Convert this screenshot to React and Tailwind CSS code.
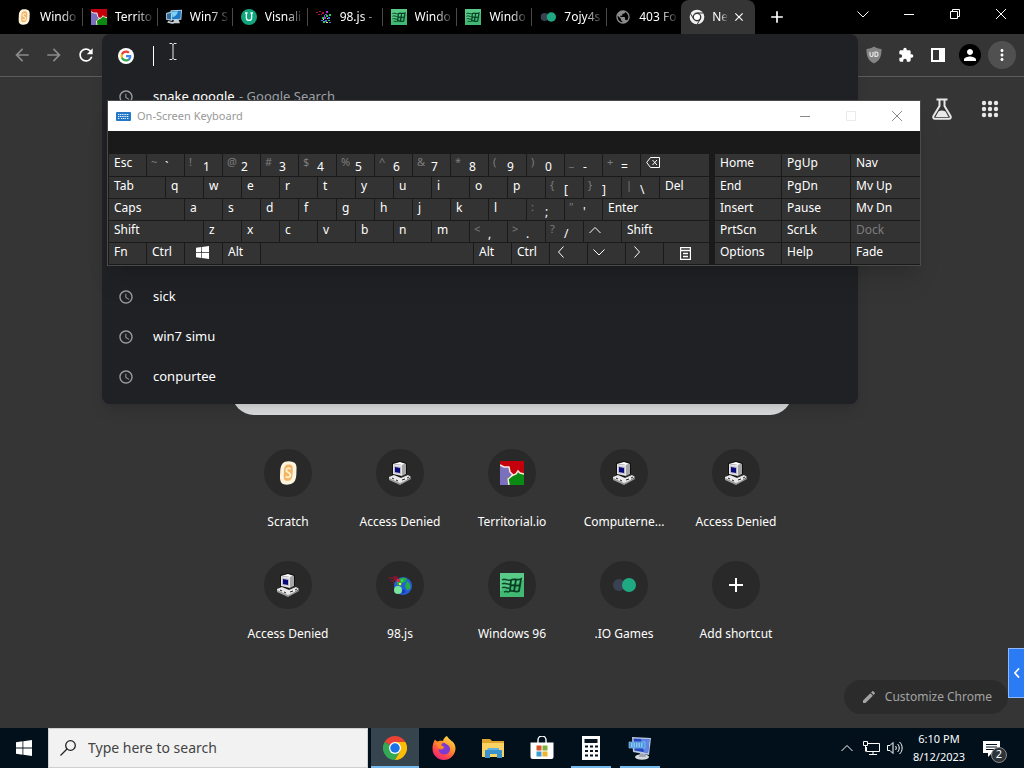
import React from 'react';
import {
  MdAccessTime,
  MdAdd,
  MdArrowBack,
  MdArrowForward,
  MdClose,
  MdEdit,
  MdExtension,
  MdMoreVert,
  MdPerson,
  MdPublic,
  MdRefresh,
} from 'react-icons/md';

/* ---------- Logos and favicons ---------- */

const ScratchIcon = ({ className }) => (
  <svg viewBox="0 0 24 24" className={className} aria-hidden="true">
    <path d="M9 .8C12-.3 18 0 19.800 3.200c1.200 2.500.6 5 .6 8.500 0 4-.6 9-4.400 10.900-3 1.500-8.600 1.600-10.600-.9C3.400 19.200 4 15 4.200 11c.1-4 .8-8.600 4.800-10.200z" fill="#fff5df" />
    <path d="M10.300 4c2-.8 5-.6 6 1.100.8 1.800.5 4.500.4 7-.2 3.200-.7 6.200-2.600 7.100-2 .9-4.800.9-5.800-.5-1-1.800-.5-5-.4-8.200.1-2.700.5-5.700 2.400-6.500z" fill="#f3b565" />
    <path d="M14.500 8c-1.600-1.400-4.200-.9-4.200 1.200 0 2.600 4.200 2.100 4.200 4.900 0 2.300-3 2.900-4.800 1.400" fill="none" stroke="#fff0cf" strokeWidth="1.800" />
  </svg>
);

const TerritorialIcon = ({ className }) => (
  <svg viewBox="0 0 24 24" className={className} aria-hidden="true">
    <rect width="24" height="24" fill="#c4000c" />
    <path d="M0 4l4 2 5 0 1 5 3 2-2 2-4 3 2 6H0z" fill="#7a70bd" />
    <path d="M24 13l-4-1-2-2-2 3-4 2-2 0-3 3 2 6h15z" fill="#0a8a12" />
    <path d="M0 4l4 2 5 0 1 5 3 3-5 4 1 6M11 15l5-2 2-3 2 2 4 1" fill="none" stroke="#ffe9dd" strokeWidth="1.500" />
  </svg>
);

const Win7Icon = ({ className }) => (
  <svg viewBox="0 0 24 24" className={className} aria-hidden="true">
    <path d="M0 6l9-3v15l-9-2z" fill="#9dbccd" />
    <path d="M1.500 7.500l6.500-2v10l-6.500-1z" fill="#2e6e9c" />
    <path d="M7 2l17-1-1 15-15 1z" fill="#b6d6e8" />
    <path d="M8.500 3.500l14-1-.8 12-12.400 1z" fill="#1c77c4" />
    <path d="M9 4l9-.7c-1 5-4 8-8.500 9z" fill="#7fd0f3" />
    <path d="M12 16.500h7l2 5H10zM3 18l9 2-1 2.500-9-2z" fill="#c3cdd2" />
  </svg>
);

const VisnalizeIcon = ({ className }) => (
  <svg viewBox="0 0 24 24" className={className} aria-hidden="true">
    <circle cx="12" cy="12" r="12" fill="#12a57d" />
    <path d="M8 6v7a4 4 0 0 0 8 0V6M6 6h4M14 6h4" fill="none" stroke="#e9fff8" strokeWidth="2" />
  </svg>
);

const JsIcon = ({ className }) => (
  <svg viewBox="0 0 24 24" className={className} aria-hidden="true">
    <path d="M1 5h4M3 8h3M6 4h3v3H6zM5 10h2" stroke="#7d1630" fill="#9c1130" strokeWidth="1.500" />
    <circle cx="15" cy="13" r="9" fill="#2460d8" />
    <path d="M9 8c3-4 8-4 10-2l-2 3-3 1-1 3-4-1zM19 8c3 2 4 5 3 8l-3 1-2-4z" fill="#28ad46" />
    <path d="M12 17l4-1 2 3-3 2z" fill="#1c3fc0" />
    <circle cx="10" cy="17" r="4" fill="#78e59a" />
    <path d="M9 6h3v3H9z" fill="#e02a35" />
    <path d="M13 6h2v3h-2z" fill="#29d65d" />
    <path d="M11 10h2v2h-2z" fill="#ffe34d" />
  </svg>
);

const PixelJsIcon = ({ className }) => (
  <svg viewBox="0 0 16 16" className={className} aria-hidden="true">
    <path d="M0 3h2v1H0zM2 5h2v1H2zM3 2h2v1H3zM6 3h2v2H6zM5 5h1v1H5z" fill="#b01345" />
    <path d="M10 2h2v2h-2zM9 5h2v1H9zM8 8h2v2H8z" fill="#a63bd6" />
    <path d="M6 8h2v2H6zM10 6h2v2h-2zM13 5h2v2h-2zM7 12h2v2H7zM12 11h2v1h-2z" fill="#28c95d" />
    <path d="M12 8h2v2h-2zM9 11h2v2H9zM5 11h2v1H5zM13 13h2v1h-2zM8 6h1v2H8z" fill="#3d6ff0" />
    <path d="M11 9h1v1h-1zM10 13h2v1h-2zM7 10h1v1H7z" fill="#f2ec72" />
  </svg>
);

const Win96Icon = ({ className }) => (
  <svg viewBox="0 0 24 24" className={className} aria-hidden="true">
    <rect width="24" height="24" fill="#41b873" />
    <path d="M0 0h24v7L0 18z" fill="#58c987" />
    <path d="M2 7c3-2 5 1 8 0M2 11c3-2 5 1 8 0M2 15c3-2 5 1 7 0M4 19c2-1 4 0 5 0" fill="none" stroke="#0b4a2a" strokeWidth="1.500" />
    <path d="M11 7c3-2 6 1 10-1l-2 12c-3 2-6-1-9 0zM16 6.500l-2 12M10.500 12.500c3-1 6 1 9.500-.5" fill="none" stroke="#073d22" strokeWidth="1.800" />
  </svg>
);

const IoIcon = ({ className }) => (
  <svg viewBox="0 0 24 24" className={className} aria-hidden="true">
    <circle cx="7" cy="12" r="6" fill="#3a4152" />
    <circle cx="17" cy="12" r="7" fill="#1fa982" />
  </svg>
);

const PcIcon = ({ className }) => (
  <svg viewBox="0 0 24 24" className={className} aria-hidden="true">
    <path d="M4 2l8-2 7 2v11l-7 3-8-2z" fill="#111" />
    <path d="M5 3l9 1v11l-9-2z" fill="#e4e4e4" />
    <path d="M14 4l4-1v10l-4 2z" fill="#a5a5a5" />
    <path d="M5 3l7-2 6 2-4 1z" fill="#fff" />
    <path d="M6 5l7 1v7l-7-1z" fill="#b9b9c9" />
    <path d="M7 6l5 1v5l-5-1z" fill="#09097c" />
    <path d="M1 16l5-2 7 3 7-3 3 2-10 7L1 18z" fill="#e9e9e9" />
    <path d="M1 17l11 5 11-5v1l-11 6L1 19z" fill="#9c9c9c" />
    <path d="M4 17l2 1M8 19l2 1M14 19l3-1M19 17l2-1" stroke="#222" />
  </svg>
);

const GoogleIcon = ({ className }) => (
  <svg viewBox="0 0 32 32" className={className} aria-hidden="true">
    <circle cx="16" cy="16" r="16" fill="#fff" />
    <g transform="translate(4 4)">
      <path d="M22.560 12.250c0-.78-.07-1.530-.2-2.250H12v4.260h5.920a5.060 5.060 0 0 1-2.200 3.320v2.770h3.570c2.080-1.920 3.270-4.740 3.270-8.100z" fill="#4285f4" />
      <path d="M12 23c2.970 0 5.460-.98 7.280-2.660l-3.570-2.770c-.98.66-2.230 1.060-3.710 1.060-2.860 0-5.290-1.930-6.160-4.530H2.180v2.840C3.990 20.530 7.700 23 12 23z" fill="#34a853" />
      <path d="M5.840 14.090a6.600 6.600 0 0 1 0-4.180V7.070H2.180a11 11 0 0 0 0 9.860z" fill="#fbbc05" />
      <path d="M12 5.380c1.620 0 3.060.56 4.210 1.640l3.150-3.150C17.450 2.090 14.970 1 12 1 7.700 1 3.990 3.470 2.180 7.070l3.660 2.840C6.710 7.310 9.140 5.380 12 5.380z" fill="#ea4335" />
    </g>
  </svg>
);

const ChromeLogo = ({ className }) => (
  <svg viewBox="0 0 48 48" className={className} aria-hidden="true">
    <path d="M24 24L3.200 12A24 24 0 0 1 44.800 12z" fill="#ea4335" />
    <path d="M24 24L3.200 12A24 24 0 0 0 24 48l10.400-18z" fill="#34a853" />
    <path d="M24 12h20.800A24 24 0 0 1 24 48l10.400-18z" fill="#fbbc05" />
    <circle cx="24" cy="24" r="12" fill="#fff" />
    <circle cx="24" cy="24" r="9.500" fill="#1a73e8" />
  </svg>
);

const MonoChromeIcon = ({ className }) => (
  <svg viewBox="0 0 24 24" className={className} aria-hidden="true">
    <circle cx="12" cy="12" r="8.800" fill="none" stroke="#f1f1f1" strokeWidth="4.400" />
    <circle cx="12" cy="12" r="4.600" fill="#fff" />
    <path d="M12 6h10M7 15L2 6.500M17 15l-5 8.500" stroke="#353535" strokeWidth="1.500" />
  </svg>
);

const FirefoxLogo = ({ className }) => (
  <svg viewBox="0 0 24 24" className={className} aria-hidden="true">
    <defs>
      <linearGradient id="fx-body" x1="0.8" y1="0" x2="0.2" y2="1">
        <stop offset="0" stopColor="#ffe34a" />
        <stop offset="0.4" stopColor="#ff9328" />
        <stop offset="0.75" stopColor="#ff3f4f" />
        <stop offset="1" stopColor="#e0258a" />
      </linearGradient>
    </defs>
    <path d="M15 0c1 2.500 3 3 4.500 5C22 6 23.800 10 23.500 13c-.5 6.200-5.500 11-11.500 11S.6 19.300.5 13C.4 9 1.500 6 3 3.500L5 6c2-1.500 4-1.500 6-1 .5-2.500 2-4 4-5z" fill="url(#fx-body)" />
    <path d="M8 8c2-1.500 4-2 6 0 3 1 4.500 3.500 4 6-.6 3-3 4.500-6 4.500S6.500 16 6.500 13c2 1 4 .8 5-.8-2-.4-4-1.700-3.500-4.200z" fill="#7b3ad3" />
    <path d="M3 4c2 2 5 2 8 3-1 .8-2 1.500-1.500 2.500l3 1.500c-1 1.800-3.500 1.800-6 1.500" fill="#ff8a26" />
  </svg>
);

const FolderLogo = ({ className }) => (
  <svg viewBox="0 0 24 24" className={className} aria-hidden="true">
    <path d="M1 3h8l2 2h12v5H1z" fill="#e0a52d" />
    <path d="M1 7h22v14H1z" fill="#fbd363" />
    <path d="M4 14h17v8h-5v-4H9v4H4z" fill="#3a93cf" />
    <path d="M6 14h12v-2H7z" fill="#62b3e4" />
  </svg>
);

const StoreLogo = ({ className }) => (
  <svg viewBox="0 0 24 24" className={className} aria-hidden="true">
    <path d="M8 7V4a4 4 0 0 1 8 0v3" fill="none" stroke="#fff" strokeWidth="1.400" />
    <path d="M.5 6.500h23V21a2 2 0 0 1-2 2h-19a2 2 0 0 1-2-2z" fill="#fff" />
    <path d="M6.500 9.500h5v5h-5z" fill="#d9542c" />
    <path d="M12.500 9.500h5v5h-5z" fill="#7fb13c" />
    <path d="M6.500 15.500h5v5h-5z" fill="#3c9bd6" />
    <path d="M12.500 15.500h5v5h-5z" fill="#efb32d" />
  </svg>
);

const CalcLogo = ({ className }) => (
  <svg viewBox="0 0 24 24" className={className} aria-hidden="true">
    <path d="M3 0h18v24H3z" fill="#fff" />
    <path d="M5.500 3h13v4h-13zM6 9.500h3v2H6zM11 9.500h3v2h-3zM16 9.500h3v2h-3zM6 14h3v2H6zM11 14h3v2h-3zM16 14h3v2h-3zM6 18.500h3v2H6zM11 18.500h3v2h-3zM16 18.500h3v2h-3z" fill="#06141f" />
  </svg>
);

const OskLogo = ({ className }) => (
  <svg viewBox="0 0 24 24" className={className} aria-hidden="true">
    <ellipse cx="14" cy="21" rx="7" ry="2.800" fill="#d6dade" />
    <path d="M12 17h5l1 4h-7z" fill="#9fa7b0" />
    <path d="M4 1l19 1-2 17-16-3z" fill="#b9c6dd" />
    <path d="M5.500 2.500l16 .8L20 17 6.500 14.600z" fill="#2448c4" />
    <path d="M13 3l8.500.3L20 17l-4-.7z" fill="#5e86e6" />
    <path d="M1 6h16v6H1z" fill="#3f95e0" stroke="#a9cdee" strokeWidth=".6" />
    <path d="M3 8h12M3 10h12" stroke="#e8f4ff" strokeDasharray="1.500 1" />
  </svg>
);

const WindowsLogo = ({ className }) => (
  <svg viewBox="0 0 16 16" className={className} fill="currentColor" aria-hidden="true">
    <path d="M0 2.200l6.500-.9v6.200H0zM7.300 1.200L16 0v7.500H7.300zM0 8.400h6.500v6.300L0 13.800zM7.300 8.400H16V16l-8.700-1.200z" />
  </svg>
);

const KeyboardIcon = ({ className }) => (
  <svg viewBox="0 0 15 9" className={className} aria-hidden="true">
    <rect width="15" height="9" rx="1" fill="#2478c7" />
    <path d="M2 2.500h11M2 4.500h11M2 6.500h2M5 6.500h5M11 6.500h2" stroke="#e5f2ff" strokeDasharray="1.200 .6" />
  </svg>
);

const FlaskIcon = () => (
  <svg viewBox="0 0 22 22" className="h-[22px] w-[22px]" aria-hidden="true">
    <path d="M5.500 1.500h11M8.500 2v6L2.500 18c-.8 1.500 0 2.700 1.500 2.700h14c1.500 0 2.300-1.200 1.500-2.700l-6-10V2" fill="none" stroke="#e8e8e8" strokeWidth="2" />
    <path d="M7.500 13.500c2-1.200 4-1.200 7 0l3 5.500H4.500z" fill="#e8e8e8" />
  </svg>
);

const AppsIcon = () => (
  <svg viewBox="0 0 18 18" className="h-[18px] w-[18px]" fill="#e8e8e8" aria-hidden="true">
    {[3, 9, 15].map((y) => [3, 9, 15].map((x) => <circle key={`${x}-${y}`} cx={x} cy={y} r="2.200" />))}
  </svg>
);

const ShieldIcon = () => (
  <svg viewBox="0 0 16 18" className="h-[18px] w-4" aria-hidden="true">
    <path d="M8 .5C10 2 13 3 15.500 3c.2 7-1.500 11.500-7.500 14.500C2 14.500.3 10 .5 3 3 3 6 2 8 .5z" fill="#858585" />
    <path d="M4 6v3a1.500 1.500 0 0 0 3 0V6M9 6v4.500h1a2 2 0 0 0 2-2.200A2 2 0 0 0 10 6z" fill="none" stroke="#e8e8e8" strokeWidth="1.200" />
  </svg>
);

const SidePanelIcon = () => (
  <svg viewBox="0 0 14 14" className="h-3.5 w-3.5" aria-hidden="true">
    <path d="M0 0h14v14H0zM2 2v10h6V2z" fill="#fff" fillRule="evenodd" />
  </svg>
);

// Thin line glyph used by window controls, arrow keys and tray icons
const Line = ({ d, className = 'h-3 w-3', width = 1 }) => (
  <svg viewBox="0 0 12 12" className={className} fill="none" stroke="currentColor" strokeWidth={width} aria-hidden="true">
    <path d={d} />
  </svg>
);

const paths = {
  up: 'M0.500 9L6 3.500L11.500 9',
  down: 'M0.500 3.500L6 9L11.500 3.500',
  left: 'M8.500 0.500L3.500 6L8.500 11.500',
  right: 'M3.500 0.500L8.500 6L3.500 11.500',
  minimize: 'M1 6.500H11',
  maximize: 'M1.500 1.500H10.500V10.500H1.500Z',
  restore: 'M1.500 3.500H8.500V10.500H1.500ZM3.500 3.500V1.500H10.500V8.500H8.500',
  close: 'M1 1L11 11M11 1L1 11',
};

/* ---------- Data ---------- */

const tabs = [
  { title: 'Windo', icon: ScratchIcon },
  { title: 'Territo', icon: TerritorialIcon },
  { title: 'Win7 S', icon: Win7Icon },
  { title: 'Visnali', icon: VisnalizeIcon },
  { title: '98.js -', icon: PixelJsIcon },
  { title: 'Windo', icon: Win96Icon },
  { title: 'Windo', icon: Win96Icon },
  { title: '7ojy4s', icon: IoIcon },
  { title: '403 Fo', icon: MdPublic },
];

const shortcuts = [
  { label: 'Scratch', icon: ScratchIcon },
  { label: 'Access Denied', icon: PcIcon },
  { label: 'Territorial.io', icon: TerritorialIcon },
  { label: 'Computerne...', icon: PcIcon },
  { label: 'Access Denied', icon: PcIcon },
  { label: 'Access Denied', icon: PcIcon },
  { label: '98.js', icon: JsIcon },
  { label: 'Windows 96', icon: Win96Icon },
  { label: '.IO Games', icon: IoIcon },
  { label: 'Add shortcut', icon: MdAdd },
];

const wide = 'flex-1';
const backspace = (
  <svg viewBox="0 0 15 11" className="mt-[3px] h-[11px] w-[15px]" fill="none" stroke="#fff" aria-hidden="true">
    <path d="M4.500.5h9v10h-9L.7 5.500zM6.500 3l4.500 5M11 3L6.500 8" />
  </svg>
);
const menuIcon = (
  <svg viewBox="0 0 11 13" className="mt-1 ml-[11px] h-[13px] w-[11px]" fill="none" stroke="#fff" aria-hidden="true">
    <path d="M.5.500h10v12H.5zM0 3.500h11M3 6.500h5M3 9.500h5" strokeWidth="1.400" />
  </svg>
);
const arrow = (name) => <Line d={paths[name]} className="mt-[3px] h-3 w-3" />;

// Plain strings are single-label keys; [shifted, base] pairs are two-label keys
const keyRows = [
  ['Esc', ['~', '`'], ['!', '1'], ['@', '2'], ['#', '3'], ['$', '4'], ['%', '5'], ['^', '6'], ['&', '7'], ['*', '8'], ['(', '9'], [')', '0'], ['_', '-'], ['+', '='], { name: 'Backspace', icon: backspace, size: wide }],
  [{ label: 'Tab', size: 'w-14' }, 'q', 'w', 'e', 'r', 't', 'y', 'u', 'i', 'o', 'p', ['{', '['], ['}', ']'], ['|', '\\'], { label: 'Del', size: wide }],
  [{ label: 'Caps', size: 'w-[75px]' }, 'a', 's', 'd', 'f', 'g', 'h', 'j', 'k', 'l', [':', ';'], ['"', "'"], { label: 'Enter', size: wide }],
  [{ label: 'Shift', size: 'w-[94px]' }, 'z', 'x', 'c', 'v', 'b', 'n', 'm', ['<', ','], ['>', '.'], ['?', '/'], { name: 'Up', icon: arrow('up') }, { label: 'Shift', size: wide }],
  ['Fn', 'Ctrl', { name: 'Windows', icon: <WindowsLogo className="mt-[3px] ml-1.5 h-[13px] w-[13px]" /> }, 'Alt', { name: 'Space', size: wide }, 'Alt', 'Ctrl', { name: 'Left', icon: arrow('left') }, { name: 'Down', icon: arrow('down') }, { name: 'Right', icon: arrow('right') }, { name: 'Menu', icon: menuIcon, size: 'w-[45px]' }],
];

const sideKeys = [
  'Home', 'PgUp', 'Nav',
  'End', 'PgDn', 'Mv Up',
  'Insert', 'Pause', 'Mv Dn',
  'PrtScn', 'ScrLk', 'Dock',
  'Options', 'Help', 'Fade',
];

/* ---------- Browser ---------- */

const TabStrip = () => (
  <div className="flex h-[34px] bg-black text-white">
    <div className="flex min-w-0 w-[755px] pl-2">
      {tabs.map(({ title, icon: Icon }, i) => (
        <button key={i} type="button" className="my-2 flex min-w-0 flex-1 items-center gap-2 overflow-hidden border-r border-[#4a4a4a] pl-2 nth-9:border-0">
          <Icon className={`h-4 w-4 shrink-0 ${Icon === MdPublic ? 'text-[#8b8b8b]' : ''}`} />
          <span className="min-w-0 flex-1 overflow-hidden whitespace-nowrap text-left text-xs [mask-image:linear-gradient(to_right,#000_50%,transparent_95%)]">{title}</span>
        </button>
      ))}
      <div className="flex min-w-0 flex-1 items-center rounded-t-lg bg-[#353535] pl-2">
        <MonoChromeIcon className="h-4 w-4 shrink-0" />
        <span className="ml-[7px] text-xs [mask-image:linear-gradient(to_right,#000_50%,transparent)]">Ne</span>
        <button type="button" aria-label="Close tab" className="ml-1"><MdClose className="h-3.5 w-3.5" /></button>
      </div>
    </div>
    <button type="button" aria-label="New tab" className="px-3"><MdAdd className="h-5 w-5" /></button>
    <div className="ml-auto flex items-start">
      {['down', 'minimize', 'restore', 'close'].map((name) => (
        <button key={name} type="button" aria-label={name} className="flex h-7 w-[46px] items-center justify-center">
          <Line d={paths[name]} />
        </button>
      ))}
    </div>
  </div>
);

const HistoryRow = ({ children }) => (
  <li className="flex h-10 items-center gap-[19px] pl-4 text-[13px] text-white">
    <MdAccessTime className="h-4 w-4 text-[#9aa0a6]" />
    <span>{children}</span>
  </li>
);

const Omnibox = () => (
  <div className="relative h-[42px] flex-1">
    <div className="absolute inset-x-0 top-0 z-10 rounded-lg bg-[#202124] pb-[7px] shadow-lg">
      <label className="flex h-[43px] items-center pl-4">
        <GoogleIcon className="h-4 w-4" />
        <span className="ml-[19px] h-5 w-px bg-white" />
        <input type="text" aria-label="Address and search bar" className="h-8 flex-1 bg-transparent px-1 text-[13px] text-white outline-none" />
      </label>
      {/* Mouse pointer */}
      <svg viewBox="0 0 8 17" className="absolute left-[67px] top-[9px] h-[17px] w-2" fill="none" stroke="#e8e8e8" aria-hidden="true">
        <path d="M.5.500h2.500l1 1 1-1h2.500M4 1v15M.5 16.500h2.500l1-1 1 1h2.500" />
      </svg>
      <ul>
        <HistoryRow>snake google <span className="ml-px text-[#9aa0a6]">- Google Search</span></HistoryRow>
      </ul>
      <ul className="mt-40">
        <HistoryRow>sick</HistoryRow>
        <HistoryRow>win7 simu</HistoryRow>
        <HistoryRow>conpurtee</HistoryRow>
      </ul>
    </div>
  </div>
);

const ToolButton = ({ label, className = '', children }) => (
  <button type="button" aria-label={label} className={`flex h-8 w-8 shrink-0 items-center justify-center ${className}`}>
    {children}
  </button>
);

const Toolbar = () => (
  <div className="flex items-center border-b border-[#5c5c5c] bg-[#353535] px-1.5 text-white">
    <ToolButton label="Back" className="text-[#8a8a8a]"><MdArrowBack className="h-5 w-5" /></ToolButton>
    <ToolButton label="Forward" className="text-[#8a8a8a]"><MdArrowForward className="h-5 w-5" /></ToolButton>
    <ToolButton label="Reload"><MdRefresh className="h-5 w-5" /></ToolButton>
    <Omnibox />
    <ToolButton label="uBlock"><ShieldIcon /></ToolButton>
    <ToolButton label="Extensions"><MdExtension className="h-4 w-4" /></ToolButton>
    <ToolButton label="Side panel"><SidePanelIcon /></ToolButton>
    <ToolButton label="Profile">
      <span className="flex h-[22px] w-[22px] items-center justify-center rounded-full bg-black"><MdPerson className="h-[18px] w-[18px]" /></span>
    </ToolButton>
    <ToolButton label="Menu">
      <span className="flex h-7 w-7 shrink-0 items-center justify-center rounded-full bg-[#505050]"><MdMoreVert className="h-[18px] w-[18px]" /></span>
    </ToolButton>
  </div>
);

const NewTabPage = () => (
  <main className="relative flex flex-1 flex-col bg-[#353535]">
    <div className="flex items-center justify-end gap-7 px-[25px] pt-[21px]">
      <button type="button" aria-label="Search labs"><FlaskIcon /></button>
      <button type="button" aria-label="Google apps"><AppsIcon /></button>
    </div>

    {/* Search box, mostly covered by the suggestion list */}
    <div className="mx-auto mt-[251px] h-11 w-[560px] rounded-full bg-[#dcdddf]" />

    <div className="mx-auto mt-[26px] grid w-[560px] grid-cols-5">
      {shortcuts.map(({ label, icon: Icon }, i) => (
        <a key={i} href="#" className="flex h-28 flex-col items-center gap-[13px] pt-2 text-white">
          <span className="flex h-12 w-12 items-center justify-center rounded-full bg-[#292929]">
            <Icon className={Icon === MdAdd ? 'h-6 w-6' : 'h-6 w-6'} />
          </span>
          <span className="whitespace-nowrap text-xs leading-6">{label}</span>
        </a>
      ))}
    </div>

    <button type="button" className="absolute bottom-3.5 right-4 flex h-[34px] items-center gap-2 rounded-full bg-[#2b2b2b] pl-[17px] pr-4 text-xs text-[#a3a3a3]">
      <MdEdit className="h-4 w-4" />
      Customize Chrome
    </button>

    <button type="button" aria-label="Open side drawer" className="absolute bottom-[30px] right-0 flex h-[50px] w-4 items-center justify-center border border-r-0 border-[#8db8ff] bg-[#2b7bf5] text-white">
      <Line d={paths.left} width={2} className="h-2.5 w-2.5" />
    </button>
  </main>
);

/* ---------- On-screen keyboard ---------- */

const Key = ({ value }) => {
  if (Array.isArray(value)) {
    return (
      <button type="button" className="flex w-[37px] shrink-0 items-start bg-[#333] pl-1">
        <span className="w-3.5 shrink-0 text-left text-[11px] leading-4 text-[#7d7d7d]">{value[0]}</span>
        <span className="pt-1 leading-[18px]">{value[1]}</span>
      </button>
    );
  }
  const key = typeof value === 'string' ? { label: value } : value;
  return (
    <button type="button" aria-label={key.name} className={`flex items-start bg-[#333] pl-[5px] leading-[18px] ${key.size || 'w-[37px] shrink-0'}`}>
      {key.label || key.icon}
    </button>
  );
};

const OnScreenKeyboard = () => (
  <section className="absolute left-[107px] top-[100px] z-20 w-[814px] border border-[#4a4a4a] bg-[#1a1a1a] text-xs text-white shadow-xl">
    <header className="flex h-[30px] items-center bg-white pl-2 text-[#999]">
      <KeyboardIcon className="h-[9px] w-[15px]" />
      <h2 className="ml-1.5 text-[11px]">On-Screen Keyboard</h2>
      <div className="ml-auto flex">
        {['minimize', 'maximize', 'close'].map((name) => (
          <button key={name} type="button" aria-label={name} className={`flex w-[46px] justify-center ${name === 'maximize' ? 'text-[#ebebeb]' : 'text-[#8a8a8a]'}`}>
            <Line d={paths[name]} />
          </button>
        ))}
      </div>
    </header>
    <div className="flex gap-1.5 pl-px pt-[23px]">
      <div className="flex flex-1 flex-col gap-px pb-px">
        {keyRows.map((row, i) => (
          <div key={i} className="flex h-[21px] gap-px first:h-[22px]">
            {row.map((value, j) => <Key key={j} value={value} />)}
          </div>
        ))}
      </div>
      <div className="grid w-[205px] grid-cols-[66px_68px_1fr] grid-rows-[22px_repeat(4,21px)] gap-px pb-px">
        {sideKeys.map((label) => (
          <button key={label} type="button" disabled={label === 'Dock'} className="flex items-start bg-[#333] pl-[5px] leading-[18px] disabled:text-[#7d7d7d]">{label}</button>
        ))}
      </div>
    </div>
  </section>
);

/* ---------- Taskbar ---------- */

const apps = [
  { name: 'Chrome', icon: ChromeLogo, state: 'active' },
  { name: 'Firefox', icon: FirefoxLogo },
  { name: 'File Explorer', icon: FolderLogo },
  { name: 'Store', icon: StoreLogo },
  { name: 'Calculator', icon: CalcLogo, state: 'open' },
  { name: 'Keyboard', icon: OskLogo, state: 'open' },
];

const Taskbar = () => (
  <footer className="flex h-10 items-stretch bg-[#02101c] text-white">
    <button type="button" aria-label="Start" className="flex w-12 items-center justify-center"><WindowsLogo className="h-4 w-4" /></button>
    <label className="flex w-80 items-center gap-3 border border-[#cfcfcf] bg-[#f2f2f2] pl-[11px] text-[#222]">
      <svg viewBox="0 0 16 16" className="h-4 w-4 shrink-0" fill="none" stroke="currentColor" strokeWidth="1.300" aria-hidden="true">
        <circle cx="10.500" cy="5.500" r="4.800" />
        <path d="M7 9L.5 15.500" />
      </svg>
      <input type="text" aria-label="Search" placeholder="Type here to search" className="min-w-0 flex-1 bg-transparent text-sm outline-none placeholder:text-[#444]" />
    </label>
    <div className="ml-[3px] flex gap-px">
      {apps.map(({ name, icon: Icon, state }) => (
        <button key={name} type="button" aria-label={name} className={`relative flex w-12 items-center justify-center ${state === 'active' ? 'bg-[#35444d]' : ''}`}>
          <Icon className="h-6 w-6" />
          {state && <span className={`absolute bottom-0 h-0.5 bg-[#76b9ed] ${state === 'active' ? 'inset-x-0' : 'inset-x-1'}`} />}
        </button>
      ))}
    </div>
    <div className="ml-auto flex items-center">
      <button type="button" aria-label="Show hidden icons" className="mr-2.5"><Line d={paths.up} /></button>
      <svg viewBox="0 0 17 14" className="mr-[7px] h-3.5 w-[17px]" fill="none" stroke="#fff" aria-hidden="true">
        <path d="M5 2.500h11.500v8H3.500V6M10 10.500v3M6 13.500h8M.5.500h4v4h-4zM2.500 4.500v6" />
      </svg>
      <svg viewBox="0 0 17 14" className="h-3.5 w-[17px]" fill="none" stroke="#fff" aria-hidden="true">
        <path d="M.5 4.500h2.500l3-3v11l-3-3H.5zM8.500 5c1 1 1 3 0 4M10.500 3c2.300 2 2.300 6 0 8M12.500 1c3.500 3 3.500 9 0 12" />
      </svg>
      <div className="ml-2 w-[54px] whitespace-nowrap text-center text-[11px] leading-[18px]">
        <div>6:10 PM</div>
        <div>8/12/2023</div>
      </div>
      <button type="button" aria-label="Notifications" className="relative ml-[17px] mr-6">
        <svg viewBox="0 0 17 17" className="h-[17px] w-[17px]" aria-hidden="true">
          <path d="M0 1h17v12H9l-4 4v-4H0z" fill="#fff" />
          <path d="M3 4.500h11M3 7h11M3 9.500h8" stroke="#02101c" />
        </svg>
        <span className="absolute -bottom-1.5 left-2 flex h-4 w-4 items-center justify-center rounded-full border border-[#888] bg-[#2d3439] text-[11px]">2</span>
      </button>
    </div>
  </footer>
);

const App = () => (
  <div className="relative flex min-h-screen flex-col overflow-hidden font-['Noto_Sans','Open_Sans',sans-serif]">
    <TabStrip />
    <Toolbar />
    <NewTabPage />
    <Taskbar />
    <OnScreenKeyboard />
  </div>
);

export default App;
